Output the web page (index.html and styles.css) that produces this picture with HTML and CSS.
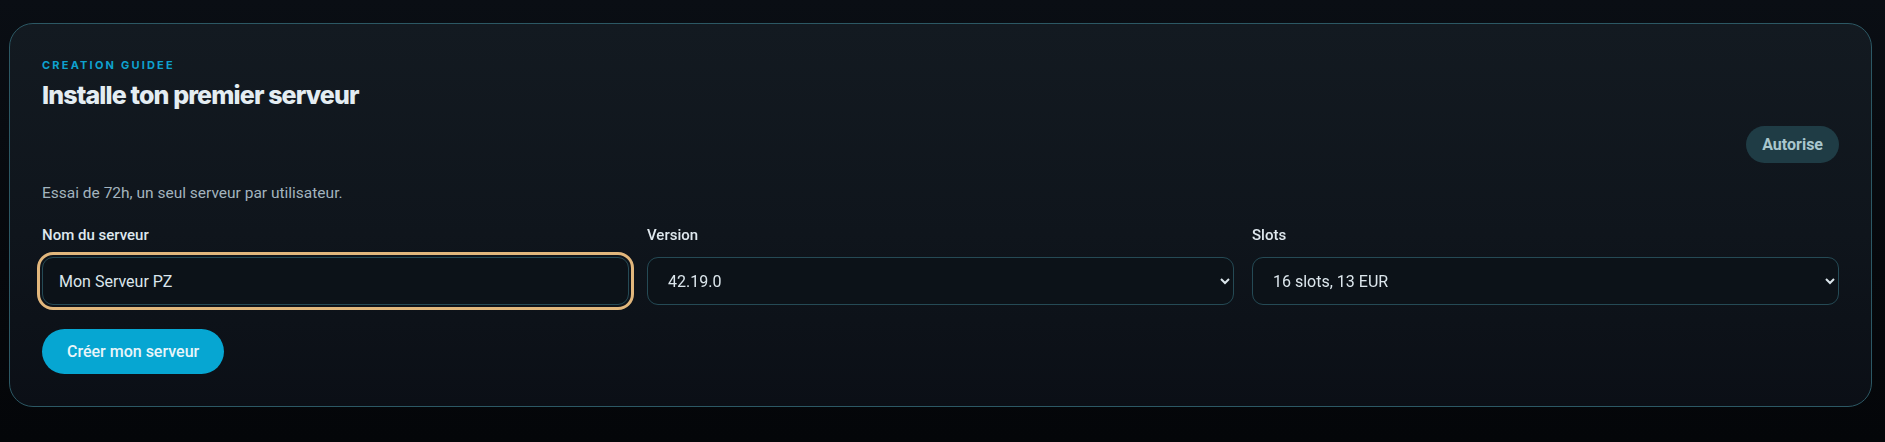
FILE: index.html
```html
<!DOCTYPE html>
<html lang="fr">
<head>
  <meta charset="UTF-8">
  <meta name="viewport" content="width=device-width, initial-scale=1.0">
  <title>Création guidée</title>
  <link rel="stylesheet" href="styles.css">
</head>
<body>

  <main class="page">
    <section class="setup-card">
      <header class="setup-head">
        <p class="eyebrow">Creation guidee</p>
        <h1>Installe ton premier serveur</h1>
      </header>

      <div class="setup-status">
        <span class="status-pill">Autorise</span>
      </div>

      <p class="setup-note">Essai de 72h, un seul serveur par utilisateur.</p>

      <form class="setup-form" onsubmit="return false">
        <div class="field-grid">
          <label class="field">
            <span class="field-label">Nom du serveur</span>
            <input id="serverName" class="field-input is-focused" type="text" value="Mon Serveur PZ">
          </label>

          <label class="field">
            <span class="field-label">Version</span>
            <select class="field-input">
              <option>42.19.0</option>
            </select>
          </label>

          <label class="field">
            <span class="field-label">Slots</span>
            <select class="field-input">
              <option>16 slots, 13 EUR</option>
            </select>
          </label>
        </div>

        <button class="create-button" type="submit">Créer mon serveur</button>
      </form>
    </section>
  </main>

  <script>
    // put the caret at the end of the server name
    const serverName = document.getElementById('serverName');
    serverName.focus();
    serverName.setSelectionRange(serverName.value.length, serverName.value.length);
  </script>

</body>
</html>
```

FILE: styles.css
```css
* {
  margin: 0;
  padding: 0;
  box-sizing: border-box;
}

html {
  color-scheme: dark;
}

body {
  font-family: 'Roboto', 'Liberation Sans', sans-serif;
  background: linear-gradient(180deg, #0a0e14 0%, #06080c 60%, #040609 100%);
  color: #dce6ec;
  min-height: 100vh;
}

.page {
  padding: 23px 13px 0 9px;
}

.setup-card {
  border: 1px solid #2c5864;
  border-radius: 24px;
  background: linear-gradient(180deg, #131a21 0%, #0f151c 55%, #0b0f16 100%);
  padding: 33px 32px 32px 32px;
}

.eyebrow {
  font-family: 'Inter', sans-serif;
  font-size: 11px;
  font-weight: 700;
  letter-spacing: 0.2em;
  text-transform: uppercase;
  color: #0ea2cf;
  line-height: 16px;
}

.setup-head h1 {
  font-family: 'Inter', sans-serif;
  font-size: 25px;
  font-weight: 800;
  letter-spacing: -0.035em;
  color: #e4edf2;
  line-height: 32px;
  margin-top: 6px;
}

.setup-status {
  display: flex;
  justify-content: flex-end;
  margin-top: 15px;
}

.status-pill {
  display: inline-block;
  padding: 0 16px;
  height: 37px;
  line-height: 37px;
  border-radius: 999px;
  background-color: #1f3c45;
  color: #a9c7ce;
  font-size: 16px;
  font-weight: 700;
}

.setup-note {
  margin-top: 19px;
  font-size: 15.5px;
  line-height: 22px;
  color: #a3b4bf;
}

.field-grid {
  display: grid;
  grid-template-columns: repeat(3, 1fr);
  gap: 18px;
  margin-top: 20px;
}

.field {
  display: flex;
  flex-direction: column;
  gap: 11px;
}

.field-label {
  font-size: 15px;
  font-weight: 500;
  line-height: 22px;
  color: #dfe8ee;
}

.field-input {
  width: 100%;
  height: 48px;
  padding: 0 16px;
  border: 1px solid #254a55;
  border-radius: 11px;
  background-color: #0c1218;
  color: #dce6ec;
  caret-color: #e6eef2;
  font-family: 'Roboto', 'Liberation Sans', sans-serif;
  font-size: 16px;
  outline: none;
}

.field-input.is-focused {
  outline: 3px solid #e2b77c;
  outline-offset: 2px;
}

.create-button {
  margin-top: 24px;
  height: 45px;
  padding: 0 25px;
  border: none;
  border-radius: 999px;
  background-color: #06a6d2;
  color: #e9f5f9;
  font-family: 'Roboto', 'Liberation Sans', sans-serif;
  font-size: 16px;
  font-weight: 500;
  cursor: pointer;
}

.create-button:hover {
  background-color: #0596be;
}
```
